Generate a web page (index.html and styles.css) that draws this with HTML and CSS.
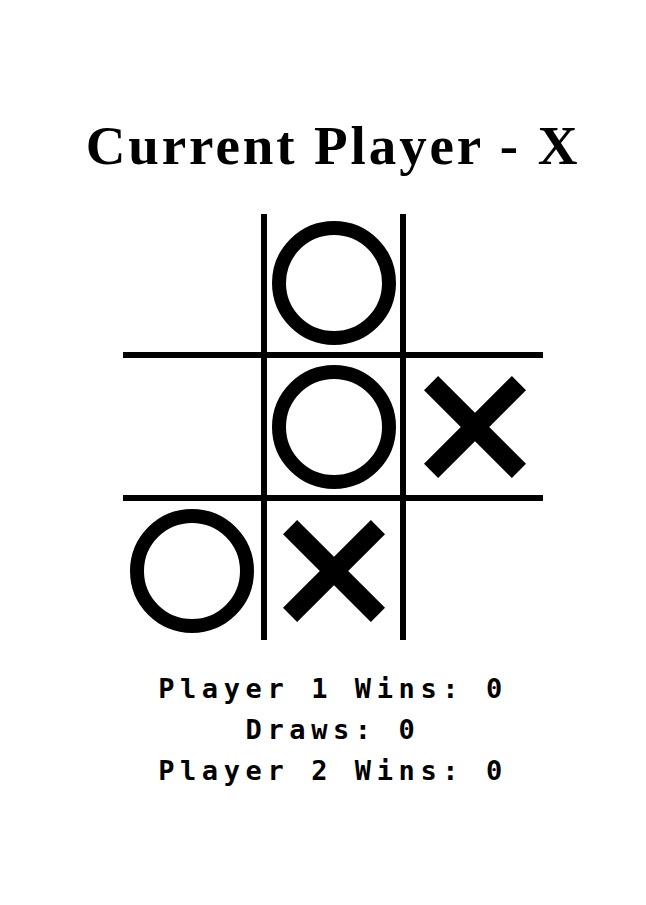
FILE: index.html
```html
<!DOCTYPE html>
<html>
<head>
<meta charset="utf-8">
<link rel="stylesheet" href="styles.css">
</head>
<body>
<main class="page">
  <h1 class="title">Current Player - X</h1>
  <div class="board">
    <div class="cell"></div>
    <div class="cell"><div class="o"></div></div>
    <div class="cell"></div>
    <div class="cell"></div>
    <div class="cell"><div class="o"></div></div>
    <div class="cell"><svg class="x" viewBox="0 0 102 102"><line x1="7.07" y1="7.07" x2="94.93" y2="94.93"/><line x1="94.93" y1="7.07" x2="7.07" y2="94.93"/></svg></div>
    <div class="cell"><div class="o"></div></div>
    <div class="cell"><svg class="x" viewBox="0 0 102 102"><line x1="7.07" y1="7.07" x2="94.93" y2="94.93"/><line x1="94.93" y1="7.07" x2="7.07" y2="94.93"/></svg></div>
    <div class="cell"></div>
  </div>
  <div class="stats">
    <div>Player 1 Wins: 0</div>
    <div>Draws: 0</div>
    <div>Player 2 Wins: 0</div>
  </div>
</main>
</body>
</html>
```
FILE: styles.css
```css
html, body {
  margin: 0;
  padding: 0;
  background: #fff;
}
.page {
  display: flex;
  flex-direction: column;
  align-items: center;
  padding: 115px 0 0 20px;
}
.title {
  margin: 0;
  font-family: "Liberation Serif", serif;
  font-weight: bold;
  font-size: 55px;
  line-height: 62px;
  letter-spacing: 2.9px;
  color: #000;
}
.board {
  margin-top: 37px;
  display: grid;
  grid-template-columns: 138px 133px 137px;
  grid-template-rows: 138px 137px 139px;
  gap: 6px;
  background: #000;
}
.cell {
  background: #fff;
  display: flex;
  align-items: center;
  justify-content: center;
}
.o {
  width: 124px;
  height: 124px;
  box-sizing: border-box;
  border: 14px solid #000;
  border-radius: 50%;
}
.x {
  width: 102px;
  height: 102px;
  stroke: #000;
  stroke-width: 20;
  stroke-linecap: butt;
}
.stats {
  margin-top: 28px;
  font-family: "DejaVu Sans Mono", monospace;
  font-weight: bold;
  font-size: 27px;
  line-height: 41px;
  letter-spacing: 5.6px;
  text-align: center;
  color: #000;
}
```
